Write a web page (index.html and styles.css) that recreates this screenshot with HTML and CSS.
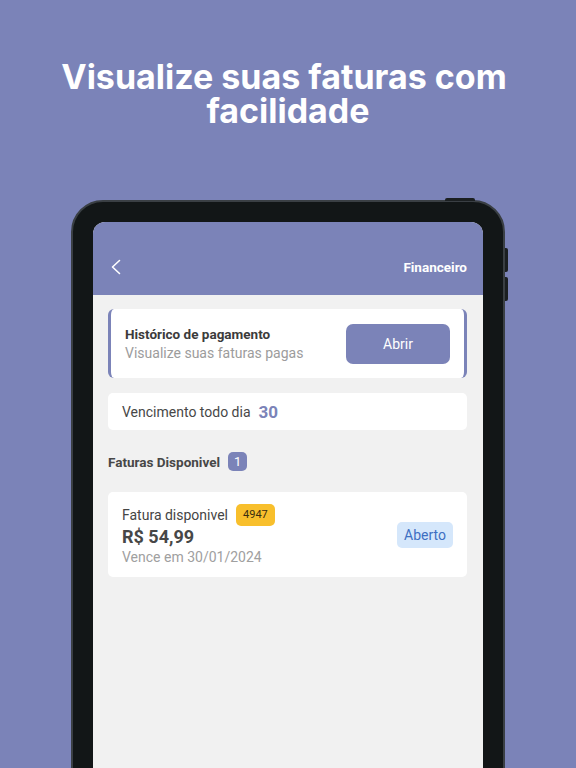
FILE: index.html
```html
<!DOCTYPE html>
<html lang="pt-BR">
<head>
  <meta charset="UTF-8">
  <meta name="viewport" content="width=device-width, initial-scale=1.0">
  <title>Financeiro</title>
  <link rel="stylesheet" href="styles.css">
</head>
<body>
  <div class="hero">
    <h1>Visualize suas faturas com&nbsp;<br>facilidade</h1>
  </div>

  <div class="tablet">
    <span class="key key-top"></span>
    <span class="key key-side-a"></span>
    <span class="key key-side-b"></span>

    <div class="screen">
      <header class="appbar">
        <svg class="back" width="12" height="16" viewBox="0 0 12 16">
          <path d="M9.5 1.5 L2.5 8 L9.5 14.5" fill="none" stroke="#fff" stroke-width="1.6" stroke-linecap="round" stroke-linejoin="round"/>
        </svg>
        <span class="appbar-title">Financeiro</span>
      </header>

      <main class="content">
        <div class="card history">
          <div class="history-text">
            <div class="history-title">Histórico de pagamento</div>
            <div class="history-sub">Visualize suas faturas pagas</div>
          </div>
          <button class="open-button">Abrir</button>
        </div>

        <div class="card due">
          <span>Vencimento todo dia</span>
          <strong class="due-day">30</strong>
        </div>

        <div class="section-title">
          <span>Faturas Disponivel</span>
          <span class="count">1</span>
        </div>

        <div class="card invoice">
          <div class="invoice-info">
            <div class="invoice-label">
              <span>Fatura disponivel</span>
              <span class="invoice-id">4947</span>
            </div>
            <div class="invoice-value">R$ 54,99</div>
            <div class="invoice-date">Vence em 30/01/2024</div>
          </div>
          <span class="status">Aberto</span>
        </div>
      </main>
    </div>
  </div>
</body>
</html>
```

FILE: styles.css
```css
body {
  margin: 0;
  padding: 0;
  background-color: #7b83b8;
  font-family: Roboto, "Liberation Sans", Arial, sans-serif;
  overflow: hidden;
  height: 768px;
}

.hero {
  height: 200px;
  box-sizing: border-box;
  padding-top: 60px;
}

.hero h1 {
  margin: 0;
  font-family: Inter, "Liberation Sans", sans-serif;
  font-weight: 700;
  font-size: 34px;
  line-height: 34px;
  color: #fff;
  text-align: center;
}

/* moldura do tablet */
.tablet {
  position: relative;
  width: 434px;
  height: 600px;
  margin-left: 71px;
  box-sizing: border-box;
  background-color: #121617;
  border: 2px solid #3a3f44;
  border-radius: 32px;
  padding: 20px;
}

.key {
  position: absolute;
  background-color: #1b1f21;
}

.key-top {
  top: -4px;
  right: 28px;
  width: 30px;
  height: 3px;
  border-radius: 2px 2px 0 0;
}

.key-side-a,
.key-side-b {
  right: -5px;
  width: 3px;
  height: 24px;
  border-radius: 0 2px 2px 0;
}

.key-side-a {
  top: 46px;
}

.key-side-b {
  top: 75px;
}

.screen {
  height: 100%;
  background-color: #f1f1f1;
  border-radius: 12px 12px 0 0;
  overflow: hidden;
}

.appbar {
  height: 73px;
  box-sizing: border-box;
  background-color: #7b83b8;
  display: flex;
  align-items: center;
  justify-content: space-between;
  padding: 16px 16px 0 17px;
}

.appbar-title {
  color: #fff;
  font-size: 13.5px;
  font-weight: 700;
}

.content {
  padding: 14px 16px 0 15px;
}

.card {
  background-color: #fff;
  border-radius: 5px;
  box-sizing: border-box;
}

.history {
  height: 69px;
  display: flex;
  align-items: center;
  justify-content: space-between;
  border-left: 3px solid #7b83b8;
  border-right: 3px solid #7b83b8;
  border-radius: 6px;
  padding: 0 14px 0 14px;
}

.history-title {
  font-size: 13.5px;
  font-weight: 700;
  color: #3b3b3b;
}

.history-sub {
  font-size: 14px;
  color: #9c9c9c;
  margin-top: 3px;
}

.open-button {
  width: 104px;
  height: 40px;
  border: none;
  border-radius: 7px;
  background-color: #7b83b8;
  color: #fff;
  font-family: inherit;
  font-size: 14px;
  cursor: pointer;
}

.due {
  margin-top: 15px;
  height: 37px;
  display: flex;
  align-items: center;
  gap: 8px;
  padding: 0 14px;
  font-size: 14px;
  color: #474747;
}

.due-day {
  color: #7b83b8;
  font-size: 17px;
}

.section-title {
  margin-top: 22px;
  display: flex;
  align-items: center;
  gap: 8px;
  font-size: 13.5px;
  font-weight: 700;
  color: #474747;
}

.count {
  display: inline-flex;
  align-items: center;
  justify-content: center;
  width: 19px;
  height: 19px;
  border-radius: 5px;
  background-color: #7b83b8;
  color: #fff;
  font-weight: 400;
  font-size: 13px;
}

.invoice {
  margin-top: 21px;
  height: 85px;
  display: flex;
  align-items: center;
  justify-content: space-between;
  padding: 0 14px;
}

.invoice-label {
  display: flex;
  align-items: center;
  gap: 8px;
  font-size: 14px;
  color: #454545;
}

.invoice-id {
  background-color: #f8bf2c;
  color: #3a2e10;
  font-size: 11px;
  padding: 0 7px;
  height: 22px;
  line-height: 22px;
  border-radius: 5px;
}

.invoice-value {
  font-size: 18px;
  font-weight: 700;
  color: #474747;
}

.invoice-date {
  font-size: 14px;
  color: #a0a0a0;
  margin-top: 2px;
}

.status {
  background-color: #d5e7fb;
  color: #3e6fc2;
  font-size: 14px;
  height: 26px;
  line-height: 26px;
  padding: 0 7px;
  border-radius: 5px;
}
```
